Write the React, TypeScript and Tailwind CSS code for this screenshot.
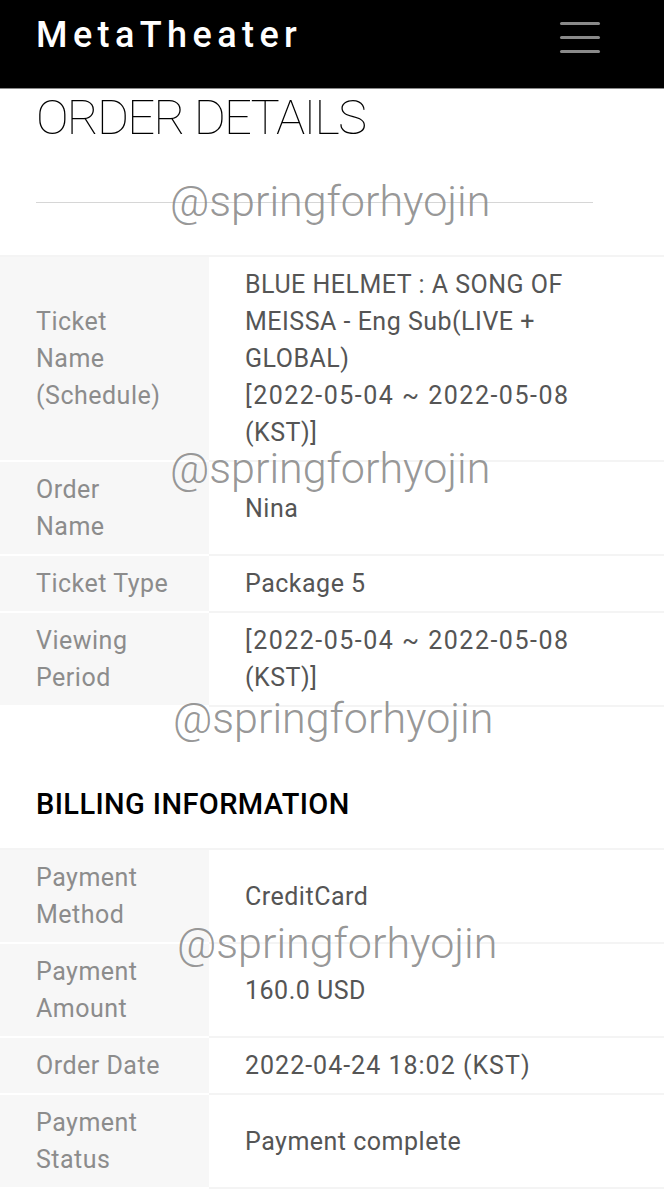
const font = { fontFamily: 'Roboto, "Noto Sans", sans-serif' }

interface Row {
  label: string[]
  value: string[]
}

const orderRows: Row[] = [
  {
    label: ['Ticket', 'Name', '(Schedule)'],
    value: ['BLUE HELMET : A SONG OF', 'MEISSA - Eng Sub(LIVE +', 'GLOBAL)', '[2022-05-04 ~ 2022-05-08', '(KST)]'],
  },
  { label: ['Order', 'Name'], value: ['Nina'] },
  { label: ['Ticket Type'], value: ['Package 5'] },
  { label: ['Viewing', 'Period'], value: ['[2022-05-04 ~ 2022-05-08', '(KST)]'] },
]

const billingRows: Row[] = [
  { label: ['Payment', 'Method'], value: ['CreditCard'] },
  { label: ['Payment', 'Amount'], value: ['160.0 USD'] },
  { label: ['Order Date'], value: ['2022-04-24 18:02 (KST)'] },
  { label: ['Payment', 'Status'], value: ['Payment complete'] },
]

function InfoTable({ rows }: { rows: Row[] }) {
  return (
    <div className="border-t-2 border-[#f4f4f4]">
      {rows.map((row) => (
        <div key={row.label.join(' ')} className="flex text-[25px] leading-[37px] tracking-[0.5px]">
          <div className="flex w-[209px] shrink-0 flex-col justify-center border-b-2 border-white bg-[#f7f7f7] py-[9px] pl-9 text-[#8c8c8c]">
            {row.label.map((l) => (
              <div key={l}>{l}</div>
            ))}
          </div>
          <div className="flex flex-1 flex-col justify-center border-b-2 border-[#f4f4f4] py-[9px] pl-9 text-[#555]">
            {row.value.map((v) => (
              <div key={v} className={v.startsWith('[') ? 'tracking-[1.5px]' : v.startsWith('2022') ? 'tracking-[1px]' : ''}>
                {v}
              </div>
            ))}
          </div>
        </div>
      ))}
    </div>
  )
}

function Watermark({ top, left }: { top: number; left: number }) {
  return (
    <div
      className="pointer-events-none absolute text-[43px] font-light leading-none text-[#8a8a8a]/90"
      style={{ top, left, fontFamily: 'Roboto, sans-serif' }}
    >
      @springforhyojin
    </div>
  )
}

export default function App() {
  return (
    <main className="relative min-h-[1200px] w-[664px] overflow-hidden bg-white" style={font}>
      {/* Header */}
      <header className="flex h-[89px] items-start justify-between border-b border-[#8a8a8a] bg-black pl-9 pr-16">
        <div className="mt-[8px] text-[36px] font-medium tracking-[5.4px] text-white">MetaTheater</div>
        <div className="mt-[22px] flex w-10 flex-col gap-[11px]">
          <span className="h-[3px] rounded-full bg-[#8a8a8a]" />
          <span className="h-[3px] rounded-full bg-[#8a8a8a]" />
          <span className="h-[3px] rounded-full bg-[#8a8a8a]" />
        </div>
      </header>

      {/* Order details */}
      <div className="px-9">
        <h1 className="mt-[-1px] text-[49px] font-thin leading-[60px] tracking-[-1.8px] text-black">ORDER DETAILS</h1>
        <div className="mr-[35px] mt-[54px] h-px bg-[#d6d6d6]" />
      </div>

      <div className="mt-[52px]">
        <InfoTable rows={orderRows} />
      </div>

      <h2 className="mt-[79px] pl-9 text-[29px] font-medium leading-[36px] tracking-[0.4px] text-black">
        BILLING INFORMATION
      </h2>

      <div className="mt-[26px]">
        <InfoTable rows={billingRows} />
      </div>

      <Watermark top={180} left={170} />
      <Watermark top={447} left={170} />
      <Watermark top={697} left={173} />
      <Watermark top={922} left={177} />
    </main>
  )
}
